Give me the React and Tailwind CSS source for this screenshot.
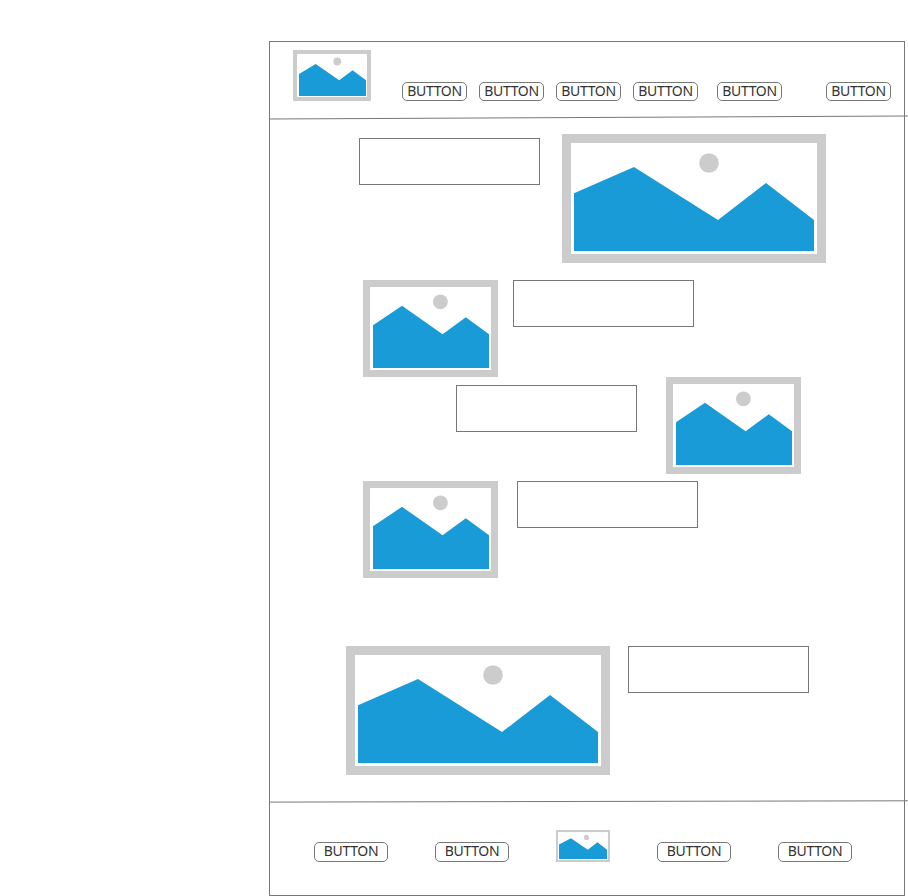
const pictures = {
  large: {
    box: 'h-[129px] w-[264px] border-[9px]',
    view: '0 0 246 111',
    hills: '3,50.3 63,24 147,77 195,40 243,77 243,108 3,108',
    sun: [138, 20, 9.8],
  },
  medium: {
    box: 'h-[97px] w-[135px] border-[7px]',
    view: '0 0 121 83',
    hills: '3,38.2 32,18.8 72.6,47.3 95.8,30.3 119,47.3 119,81 3,81',
    sun: [70.4, 14.8, 7.4],
  },
  small: {
    box: 'h-[51px] w-[78px] border-4',
    view: '0 0 70 43',
    hills: '2,20 18.7,10 42.2,26.3 55.6,16.3 69,26.3 69,42 2,42',
    sun: [40.3, 7.5, 3.9],
  },
  tiny: {
    box: 'h-8 w-[54px] border-2',
    view: '0 0 50 28',
    hills: '1,12.5 13,6.2 29.8,17.8 39.4,10.3 49,17.8 49,27 1,27',
    sun: [28.5, 5.4, 2.6],
  },
};

function Picture({ size, className = '' }) {
  const { box, view, hills, sun } = pictures[size];
  return (
    <div className={`shrink-0 border-[#cccccc] bg-white ${box} ${className}`}>
      <svg viewBox={view} className="block h-full w-full">
        <circle cx={sun[0]} cy={sun[1]} r={sun[2]} fill="#cccccc" />
        <polygon points={hills} fill="#189bd6" />
      </svg>
    </div>
  );
}

function TextBox({ className = '' }) {
  return <div className={`h-[47px] w-[181px] shrink-0 border border-[#777777] bg-white ${className}`} />;
}

function Button({ className = '' }) {
  return (
    <button className={`flex shrink-0 items-start justify-center rounded-[5px] border border-[#777777] bg-white ${className}`}>
      <span className="font-['Noto_Sans',sans-serif] text-sm leading-[15px] tracking-[-0.3px] text-[#333333]">BUTTON</span>
    </button>
  );
}

function Divider({ from, to, className = '' }) {
  return (
    <svg width="634" height="6" className={`block shrink-0 overflow-visible ${className}`}>
      <line x1="0" y1={from} x2="638" y2={to} stroke="#777777" strokeWidth="1" />
    </svg>
  );
}

export default function App() {
  return (
    <div className="h-[896px] w-[908px] overflow-hidden bg-white pl-[269px] pt-[41px]">
      <div className="flex h-[855px] w-[636px] flex-col border border-[#777777]">
        <header className="flex h-[73px] shrink-0 items-start pl-[23px] pt-2">
          <Picture size="small" />
          <nav className="ml-[31px] mt-8 flex gap-3">
            <Button className="h-[19px] w-[65px]" />
            <Button className="h-[19px] w-[65px]" />
            <Button className="h-[19px] w-[65px]" />
            <Button className="h-[19px] w-[65px]" />
            <Button className="ml-[7px] h-[19px] w-[65px]" />
            <Button className="ml-8 h-[19px] w-[65px]" />
          </nav>
        </header>
        <Divider from="4" to="1" />
        <main className="flex shrink-0 flex-col pt-[13px]">
          <section className="flex items-start gap-[22px] pl-[89px]">
            <TextBox className="mt-1" />
            <Picture size="large" />
          </section>
          <section className="mt-[17px] flex items-start gap-[15px] pl-[93px]">
            <Picture size="medium" />
            <TextBox />
          </section>
          <section className="flex items-start gap-[29px] pl-[186px]">
            <TextBox className="mt-2" />
            <Picture size="medium" />
          </section>
          <section className="mt-[7px] flex items-start gap-[19px] pl-[93px]">
            <Picture size="medium" />
            <TextBox />
          </section>
          <section className="mt-[68px] flex items-start gap-[18px] pl-[76px]">
            <Picture size="large" />
            <TextBox />
          </section>
        </main>
        <Divider from="4.1" to="2.8" className="mt-[23px]" />
        <footer className="flex items-start gap-[47px] pl-11 pt-[26px]">
          <Button className="mt-3 h-5 w-[74px]" />
          <Button className="mt-3 h-5 w-[74px]" />
          <Picture size="tiny" />
          <Button className="mt-3 h-5 w-[74px]" />
          <Button className="mt-3 h-5 w-[74px]" />
        </footer>
      </div>
    </div>
  );
}
